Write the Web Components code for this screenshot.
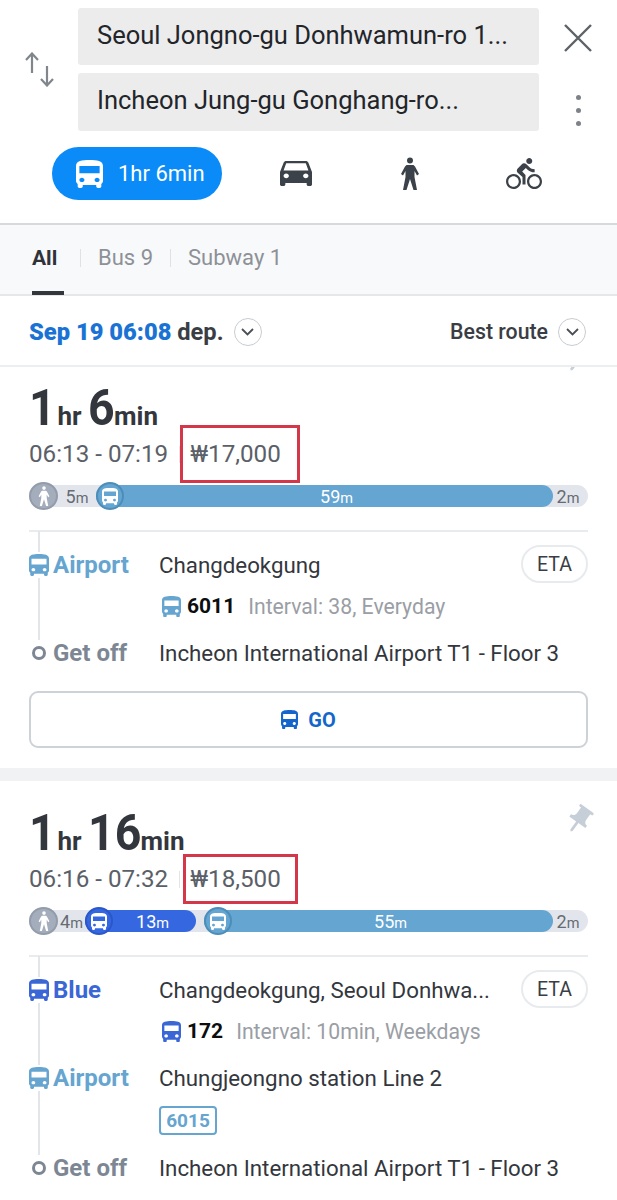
<!DOCTYPE html>
<html lang="en">
<head>
<meta charset="utf-8">
<title>Directions</title>
<style>
  html, body { margin: 0; padding: 0; background: #fff; }
  body { width: 617px; height: 1200px; overflow: hidden; font-family: Roboto, "Noto Sans", sans-serif; color: #33373d; }
</style>
</head>
<body>
<search-header></search-header>
<filter-tabs></filter-tabs>
<sort-bar></sort-bar>

<route-card hours="1" mins="6" time="06:13 - 07:19" fare="₩17,000" style="--top:20px;--pin-top:-25px;--box-left:151px;--box-w:120px;--box-h:58px">
  <time-bar slot="bar">
    <bar-seg kind="walk" w="67" num="5"></bar-seg>
    <bar-seg kind="bus" w="457" num="59" color="#64a5d2"></bar-seg>
    <bar-seg kind="rest" w="35" num="2"></bar-seg>
  </time-bar>
  <route-step label="Airport" color="#65a5d0">
    Changdeokgung
    <eta-button slot="action"></eta-button>
    <bus-line slot="sub" no="6011" color="#65a5d0">Interval: 38, Everyday</bus-line>
  </route-step>
  <route-step label="Get off" color="#7d8794" kind="end">Incheon International Airport T1 - Floor 3</route-step>
  <go-button slot="foot"></go-button>
</route-card>

<route-card hours="1" mins="16" time="06:16 - 07:32" fare="₩18,500" style="--top:31px;--pin-top:22px;--gap:0;--box-left:154px;--box-w:115px;--box-h:50px">
  <time-bar slot="bar">
    <bar-seg kind="walk" w="56" num="4"></bar-seg>
    <bar-seg kind="bus" w="111" num="13" color="#3568e0" ring="#2a57c9"></bar-seg>
    <bar-seg kind="gap" w="8"></bar-seg>
    <bar-seg kind="bus" w="349" num="55" color="#64a5d2"></bar-seg>
    <bar-seg kind="rest" w="35" num="2"></bar-seg>
  </time-bar>
  <route-step label="Blue" color="#3a66d6">
    Changdeokgung, Seoul Donhwa...
    <eta-button slot="action"></eta-button>
    <bus-line slot="sub" no="172" color="#3a66d6">Interval: 10min, Weekdays</bus-line>
  </route-step>
  <route-step label="Airport" color="#65a5d0" style="--after:2px">
    Chungjeongno station Line 2
    <line-chip slot="sub" color="#65a5d0">6015</line-chip>
  </route-step>
  <route-step label="Get off" color="#7d8794" kind="end">Incheon International Airport T1 - Floor 3</route-step>
</route-card>

<script>
const ICONS = {
  bus: ['4 2 16 19', 'M4 16c0 .88.39 1.67 1 2.22V20c0 .55.45 1 1 1h1c.55 0 1-.45 1-1v-1h8v1c0 .55.45 1 1 1h1c.55 0 1-.45 1-1v-1.78c.61-.55 1-1.34 1-2.22V6c0-3.5-3.58-4-8-4s-8 .5-8 4v10zm3.5 1c-.83 0-1.5-.67-1.5-1.5S6.67 14 7.5 14s1.5.67 1.5 1.5S8.33 17 7.5 17zm9 0c-.83 0-1.5-.67-1.5-1.5s.67-1.5 1.5-1.5 1.5.67 1.5 1.5-.67 1.5-1.5 1.5zm1.5-6H6V6h12v5z'],
  car: ['3 5 18 16', 'M18.92 6.01C18.72 5.42 18.16 5 17.5 5h-11c-.66 0-1.21.42-1.42 1.01L3 12v8c0 .55.45 1 1 1h1c.55 0 1-.45 1-1v-1h12v1c0 .55.45 1 1 1h1c.55 0 1-.45 1-1v-8l-2.08-5.99zM6.5 16c-.83 0-1.5-.67-1.5-1.5S5.67 13 6.5 13s1.5.67 1.5 1.5S7.33 16 6.5 16zm11 0c-.83 0-1.5-.67-1.5-1.5s.67-1.5 1.5-1.5 1.5.67 1.5 1.5-.67 1.5-1.5 1.5zM5 11l1.5-4.5h11L19 11H5z'],
  walk: ['0 0 20 33', 'M10 .5a3 3 0 1 1 0 6 3 3 0 0 1 0-6zM6.5 8h7l1.5 1.5 4 7.5-2 1.5-2.5-4.5V20l2.5 13h-3.5L10 22 6.5 33H3l2.5-13v-6L3 18.5 1 17l4-7.5z'],
  bike: ['0 1.5 24 20.5', 'M15.5 5.5c1.1 0 2-.9 2-2s-.9-2-2-2-2 .9-2 2 .9 2 2 2zM5 12c-2.8 0-5 2.2-5 5s2.2 5 5 5 5-2.2 5-5-2.2-5-5-5zm0 8.5c-1.9 0-3.5-1.6-3.5-3.5s1.6-3.5 3.5-3.5 3.5 1.6 3.5 3.5-1.6 3.5-3.5 3.5zm5.8-10l2.4-2.4.8.8c1.3 1.3 3 2.1 5.1 2.1V9c-1.5 0-2.7-.6-3.6-1.5l-1.9-1.9c-.5-.4-1-.6-1.6-.6s-1.1.2-1.4.6L7.8 8.4c-.4.4-.6.9-.6 1.4 0 .6.2 1.1.6 1.4L11 14v5h2v-6.2l-2.2-2.3zM19 12c-2.8 0-5 2.2-5 5s2.2 5 5 5 5-2.2 5-5-2.2-5-5-5zm0 8.5c-1.9 0-3.5-1.6-3.5-3.5s1.6-3.5 3.5-3.5 3.5 1.6 3.5 3.5-1.6 3.5-3.5 3.5z'],
  pin: ['0 0 24 24', 'M16 9V4h1c.55 0 1-.45 1-1s-.45-1-1-1H7c-.55 0-1 .45-1 1s.45 1 1 1h1v5c0 1.66-1.34 3-3 3v2h5.97v7l1 1 1-1v-7H19v-2c-1.66 0-3-1.34-3-3z']
};

// small svg icon, size comes from attributes
class XIcon extends HTMLElement {
  connectedCallback() {
    const [box, d] = ICONS[this.getAttribute('name')];
    const w = this.getAttribute('w'), h = this.getAttribute('h');
    this.attachShadow({ mode: 'open' }).innerHTML = `
      <style>:host { display: block; width: ${w}px; height: ${h}px; line-height: 0; } svg { width: 100%; height: 100%; fill: currentColor; fill-rule: evenodd; }</style>
      <svg viewBox="${box}" preserveAspectRatio="none"><path d="${d}"/></svg>`;
  }
}

class SearchHeader extends HTMLElement {
  constructor() {
    super();
    this.attachShadow({ mode: 'open' }).innerHTML = `
      <style>
        :host { display: block; height: 223px; background: #fff; border-bottom: 2px solid #d7dadc; }
        .top { display: grid; grid-template-columns: 78px 461px 78px; height: 131px; padding-top: 8px; box-sizing: border-box; }
        .swap { display: flex; align-items: center; padding-left: 25px; color: #80868c; height: 123px; }
        .fields { display: flex; flex-direction: column; gap: 8px; }
        .field { height: 57px; background: #ececec; border-radius: 3px; padding-left: 19px; font-size: 25.5px; line-height: 55px; color: #22252a; white-space: nowrap; overflow: hidden; }
        .field + .field { height: 58px; }
        .side { display: flex; flex-direction: column; align-items: center; justify-content: space-between; height: 123px; padding: 16px 0 5px; box-sizing: border-box; }
        .dots { display: flex; flex-direction: column; gap: 8px; }
        .dots i { display: block; width: 5px; height: 5px; border-radius: 50%; background: #7d8288; }
        .modes { display: flex; align-items: center; height: 53px; margin-top: 16px; }
        .pill { display: flex; align-items: center; gap: 15px; margin-left: 52px; width: 170px; height: 53px; box-sizing: border-box; padding-left: 24px; border-radius: 27px; background: #0a8bf7; color: #fff; font-size: 22px; }
        .m { color: #3c4249; }
      </style>
      <div class="top">
        <div class="swap">
          <svg width="29" height="35" viewBox="0 0 29 35" fill="none" stroke="currentColor" stroke-width="2.2"><path d="M7 21V1.5M1 8l6-6.5L13 8M22 14v19.5M16 27l6 6.5 6-6.5"/></svg>
        </div>
        <div class="fields">
          <div class="field">Seoul Jongno-gu Donhwamun-ro 1...</div>
          <div class="field">Incheon Jung-gu Gonghang-ro...</div>
        </div>
        <div class="side">
          <svg width="28" height="28" viewBox="0 0 28 28" stroke="#5d6268" stroke-width="2.4"><path d="M1 1l26 26M27 1L1 27"/></svg>
          <div class="dots"><i></i><i></i><i></i></div>
        </div>
      </div>
      <div class="modes">
        <div class="pill"><x-icon name="bus" w="27" h="28"></x-icon><span>1hr 6min</span></div>
        <x-icon class="m" name="car" w="32" h="25" style="margin-left:58px"></x-icon>
        <x-icon class="m" name="walk" w="20" h="33" style="margin-left:88px"></x-icon>
        <x-icon class="m" name="bike" w="36" h="31" style="margin-left:86px"></x-icon>
      </div>`;
  }
}

class FilterTabs extends HTMLElement {
  constructor() {
    super();
    this.attachShadow({ mode: 'open' }).innerHTML = `
      <style>
        :host { display: flex; align-items: center; box-sizing: border-box; height: 71px; background: #f8f9fb; border-bottom: 2px solid #e5e7e9; padding: 0 0 4px 32px; font-size: 22px; color: #8d9197; position: relative; }
        .all { color: #2f3339; font-weight: 700; font-size: 21px; width: 31px; }
        .sep { width: 1px; height: 18px; background: #dfe1e4; margin: 0 17px; }
        .bar { position: absolute; left: 32px; bottom: -1px; width: 32px; height: 4px; background: #33373d; }
      </style>
      <span class="all">All</span><i class="sep"></i><span>Bus 9</span><i class="sep"></i><span>Subway 1</span>
      <div class="bar"></div>`;
  }
}

class SortBar extends HTMLElement {
  constructor() {
    super();
    const chev = `<span class="c"><svg width="13" height="8" viewBox="0 0 13 8" fill="none" stroke="#4a4f55" stroke-width="1.8"><path d="M1 1l5.5 5.5L12 1"/></svg></span>`;
    this.attachShadow({ mode: 'open' }).innerHTML = `
      <style>
        :host { display: flex; align-items: center; box-sizing: border-box; height: 71px; padding: 2px 31px 0 29px; border-bottom: 2px solid #eceef0; font-weight: 700; background: #fff; }
        .d { font-size: 23.7px; color: #3a3e44; }
        .d b { color: #1a73d4; }
        .c { display: inline-flex; align-items: center; justify-content: center; width: 28px; height: 28px; box-sizing: border-box; border: 1.5px solid #c9cccf; border-radius: 50%; }
        .r { margin-left: auto; font-size: 21.3px; font-weight: 500; color: #3a3e44; margin-right: 10px; }
      </style>
      <span class="d"><b>Sep 19 06:08</b> dep.</span><span style="margin-left:10px;display:inline-flex">${chev}</span>
      <span class="r">Best route</span>${chev}`;
  }
}

class RouteCard extends HTMLElement {
  connectedCallback() {
    const a = n => this.getAttribute(n);
    const num = s => `<b style="width:${s.length * 26.5}px">${s}</b>`;
    this.attachShadow({ mode: 'open' }).innerHTML = `
      <style>
        :host { display: block; position: relative; overflow: hidden; background: #fff; padding: var(--top) 29px 0; border-bottom: var(--gap, 13px) solid #f1f2f4; }
        .title { height: 44px; line-height: 42px; font-weight: 700; color: #33373d; font-size: 26px; white-space: nowrap; }
        .title b { display: inline-block; font-size: 50px; font-weight: 700; transform: scaleX(.93); transform-origin: left; }
        .title .u { margin: 0 6px 0 2px; }
        .meta { position: relative; display: flex; align-items: center; height: 30px; margin-top: 8px; font-size: 24.2px; color: #5b6068; }
        .meta .sep { width: 1px; height: 17px; background: #e2e4e7; margin: 0 10px 0 11px; }
        .box { position: absolute; left: var(--box-left); top: 50%; width: var(--box-w); height: var(--box-h); transform: translateY(-50%); box-sizing: border-box; border: 3px solid #d5374a; }
        .rule { height: 2px; background: #e9ecef; margin: 23px 0 13px; }
        .steps { position: relative; display: block; }
        .line { position: absolute; left: 8.5px; top: -14px; bottom: 20px; width: 2px; background: #e2e6ea; }
        .pin { position: absolute; right: 21px; color: #c6ced7; transform: rotate(36deg); top: var(--pin-top); }
      </style>
      <x-icon class="pin" name="pin" w="34" h="34"></x-icon>
      <div class="title">${num(a('hours'))}<span class="u">hr</span>${num(a('mins'))}min</div>
      <div class="meta"><span>${a('time')}</span><i class="sep"></i><span>${a('fare')}</span><div class="box"></div></div>
      <slot name="bar"></slot>
      <div class="rule"></div>
      <div class="steps"><div class="line"></div><slot></slot></div>
      <slot name="foot"></slot>`;
  }
}

class TimeBar extends HTMLElement {
  constructor() {
    super();
    this.attachShadow({ mode: 'open' }).innerHTML = `
      <style>:host { display: flex; height: 22px; margin-top: 16px; background: #e2e6ec; border-radius: 11px; }</style><slot></slot>`;
  }
}

class BarSeg extends HTMLElement {
  connectedCallback() {
    const kind = this.getAttribute('kind'), num = this.getAttribute('num');
    const color = this.getAttribute('color') || '#64a5d2';
    const ring = this.getAttribute('ring') || '#4d8db9';
    const label = num ? `<span class="t">${num}<small>m</small></span>` : '';
    let inner = label, css = '';
    if (kind === 'walk') {
      inner = `<div class="o walk"><x-icon name="walk" w="12" h="20"></x-icon></div>${label}`;
      css = `:host { padding-left: 29px; color: #666b72; }`;
    } else if (kind === 'bus') {
      inner = `<div class="o bus"><x-icon name="bus" w="16" h="17"></x-icon></div>${label}`;
      css = `:host { padding-left: 24px; background: ${color}; color: #fff; border-radius: 11px; }`;
    } else if (kind === 'rest') {
      css = `:host { padding-right: 5px; color: #666b72; }`;
    }
    this.attachShadow({ mode: 'open' }).innerHTML = `
      <style>
        :host { display: flex; box-sizing: border-box; position: relative; align-items: center; justify-content: center; flex: 0 0 ${this.getAttribute('w')}px; font-size: 18px; }
        .t small { font-size: 14.5px; }
        .o { position: absolute; left: 0; top: -3px; box-sizing: border-box; width: 28px; height: 28px; border-radius: 50%; display: flex; align-items: center; justify-content: center; color: #fff; }
        .walk { width: 29px; background: #a4adbb; border: 2px solid #939cab; }
        .bus { background: ${color}; border: 2px solid ${ring}; }
        ${css}
      </style>${inner}`;
  }
}

class RouteStep extends HTMLElement {
  connectedCallback() {
    const color = this.getAttribute('color');
    const end = this.getAttribute('kind') === 'end';
    const mark = end ? '<i class="dot"></i>' : '<x-icon name="bus" w="20" h="22"></x-icon>';
    this.attachShadow({ mode: 'open' }).innerHTML = `
      <style>
        :host { display: grid; position: relative; grid-template-columns: 130px 1fr; grid-template-rows: 40px auto; padding-bottom: calc(${end ? '0px' : '4px'} + var(--after, 0px)); font-size: 22.3px; color: #33373d; }
        .lab { display: flex; align-items: center; gap: 4px; font-weight: 700; font-size: 24px; color: ${color}; white-space: nowrap; }
        .mk { display: flex; align-items: center; justify-content: center; width: 20px; height: 26px; background: #fff; }
        .dot { box-sizing: border-box; width: 14px; height: 14px; border: 3.5px solid ${color}; border-radius: 50%; background: #fff; }
        .main { line-height: 40px; white-space: nowrap; }
        .act { position: absolute; right: 0; top: 0; }
        .sub { grid-column: 2; display: flex; align-items: center; }
        .sub:not(.on) { display: none; }
      </style>
      <div class="lab"><span class="mk" style="color:${color}">${mark}</span>${this.getAttribute('label')}</div>
      <div class="main"><slot></slot></div>
      <div class="act"><slot name="action"></slot></div>
      <div class="sub ${end ? '' : 'on'}"><slot name="sub"></slot></div>`;
  }
}

class BusLine extends HTMLElement {
  connectedCallback() {
    this.attachShadow({ mode: 'open' }).innerHTML = `
      <style>
        :host { display: flex; align-items: center; height: 42px; padding: 0 0 2px 3px; font-size: 21.2px; color: #9a9ea5; white-space: nowrap; }
        x-icon { color: ${this.getAttribute('color')}; }
        b { color: #0c0d0f; font-weight: 700; margin: 0 13px 0 6px; font-size: 21px; }
      </style>
      <x-icon name="bus" w="19" h="21"></x-icon><b>${this.getAttribute('no')}</b><slot></slot>`;
  }
}

class LineChip extends HTMLElement {
  connectedCallback() {
    const c = this.getAttribute('color');
    this.attachShadow({ mode: 'open' }).innerHTML = `
      <style>
        :host { display: flex; align-items: center; justify-content: center; margin: 8px 0 7px; box-sizing: border-box; width: 58px; height: 29px; border: 2px solid ${c}; border-radius: 4px; color: ${c}; font-weight: 700; font-size: 19px; }
      </style><slot></slot>`;
  }
}

class EtaButton extends HTMLElement {
  constructor() {
    super();
    this.attachShadow({ mode: 'open' }).innerHTML = `
      <style>
        :host { display: flex; align-items: center; justify-content: center; width: 67px; height: 38px; box-sizing: border-box; border: 2px solid #e8ebee; border-radius: 19px; font-size: 19.5px; color: #3a3e44; background: #fff; }
      </style>ETA`;
  }
}

class GoButton extends HTMLElement {
  constructor() {
    super();
    this.attachShadow({ mode: 'open' }).innerHTML = `
      <style>
        :host { display: flex; align-items: center; justify-content: center; gap: 10px; height: 57px; box-sizing: border-box; margin: 18px 0 20px; border: 2px solid #cdd2d6; border-radius: 9px; color: #1566cc; font-weight: 700; font-size: 20px; }
      </style><x-icon name="bus" w="17" h="19"></x-icon><span>GO</span>`;
  }
}

customElements.define('x-icon', XIcon);
customElements.define('search-header', SearchHeader);
customElements.define('filter-tabs', FilterTabs);
customElements.define('sort-bar', SortBar);
customElements.define('route-card', RouteCard);
customElements.define('time-bar', TimeBar);
customElements.define('bar-seg', BarSeg);
customElements.define('route-step', RouteStep);
customElements.define('bus-line', BusLine);
customElements.define('line-chip', LineChip);
customElements.define('eta-button', EtaButton);
customElements.define('go-button', GoButton);
</script>
</body>
</html>
